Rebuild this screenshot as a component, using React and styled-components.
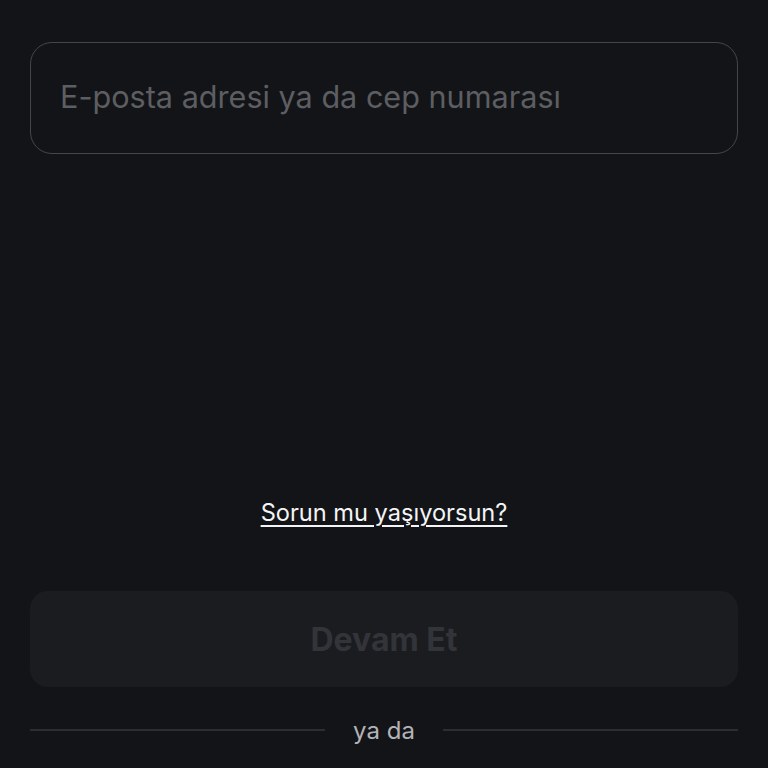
import styled, { createGlobalStyle } from 'styled-components'

const GlobalStyle = createGlobalStyle`
  html, body {
    margin: 0;
    padding: 0;
    background: #131418;
  }
  body {
    font-family: Inter, "Noto Sans", sans-serif;
  }
`

const Page = styled.div`
  display: flex;
  flex-direction: column;
  padding: 42px 30px 0;
  min-height: 768px;
  box-sizing: border-box;
`

const Field = styled.input`
  box-sizing: border-box;
  width: 100%;
  height: 112px;
  padding: 0 29px 4px;
  background: transparent;
  border: 1.5px solid #45464b;
  border-radius: 22px;
  color: #e6e6e9;
  font-family: inherit;
  font-size: 30.6px;
  font-weight: 400;
  outline: none;

  &::placeholder {
    color: #5d5e62;
  }
`

const HelpLink = styled.a`
  align-self: center;
  margin-top: 344px;
  line-height: 30px;
  font-size: 23.6px;
  color: #f4f4f6;
  text-decoration: underline;
  text-underline-offset: 4px;
  text-decoration-thickness: 1.5px;
`

const Button = styled.button`
  margin-top: 63px;
  height: 96px;
  border: none;
  border-radius: 18px;
  background: #1b1c20;
  color: #333439;
  font-family: inherit;
  font-size: 32px;
  font-weight: 700;
`

const Divider = styled.div`
  display: flex;
  align-items: center;
  gap: 28px;
  margin-top: 28px;
  height: 30px;
  color: #b3b3b7;
  font-size: 24px;

  &::before,
  &::after {
    content: '';
    flex: 1;
    height: 1.5px;
    background: #2d2e33;
  }
`

export default function App() {
  return (
    <>
      <GlobalStyle />
      <Page>
        <Field placeholder="E-posta adresi ya da cep numarası" />
        <HelpLink href="#">Sorun mu yaşıyorsun?</HelpLink>
        <Button disabled>Devam Et</Button>
        <Divider>ya da</Divider>
      </Page>
    </>
  )
}
